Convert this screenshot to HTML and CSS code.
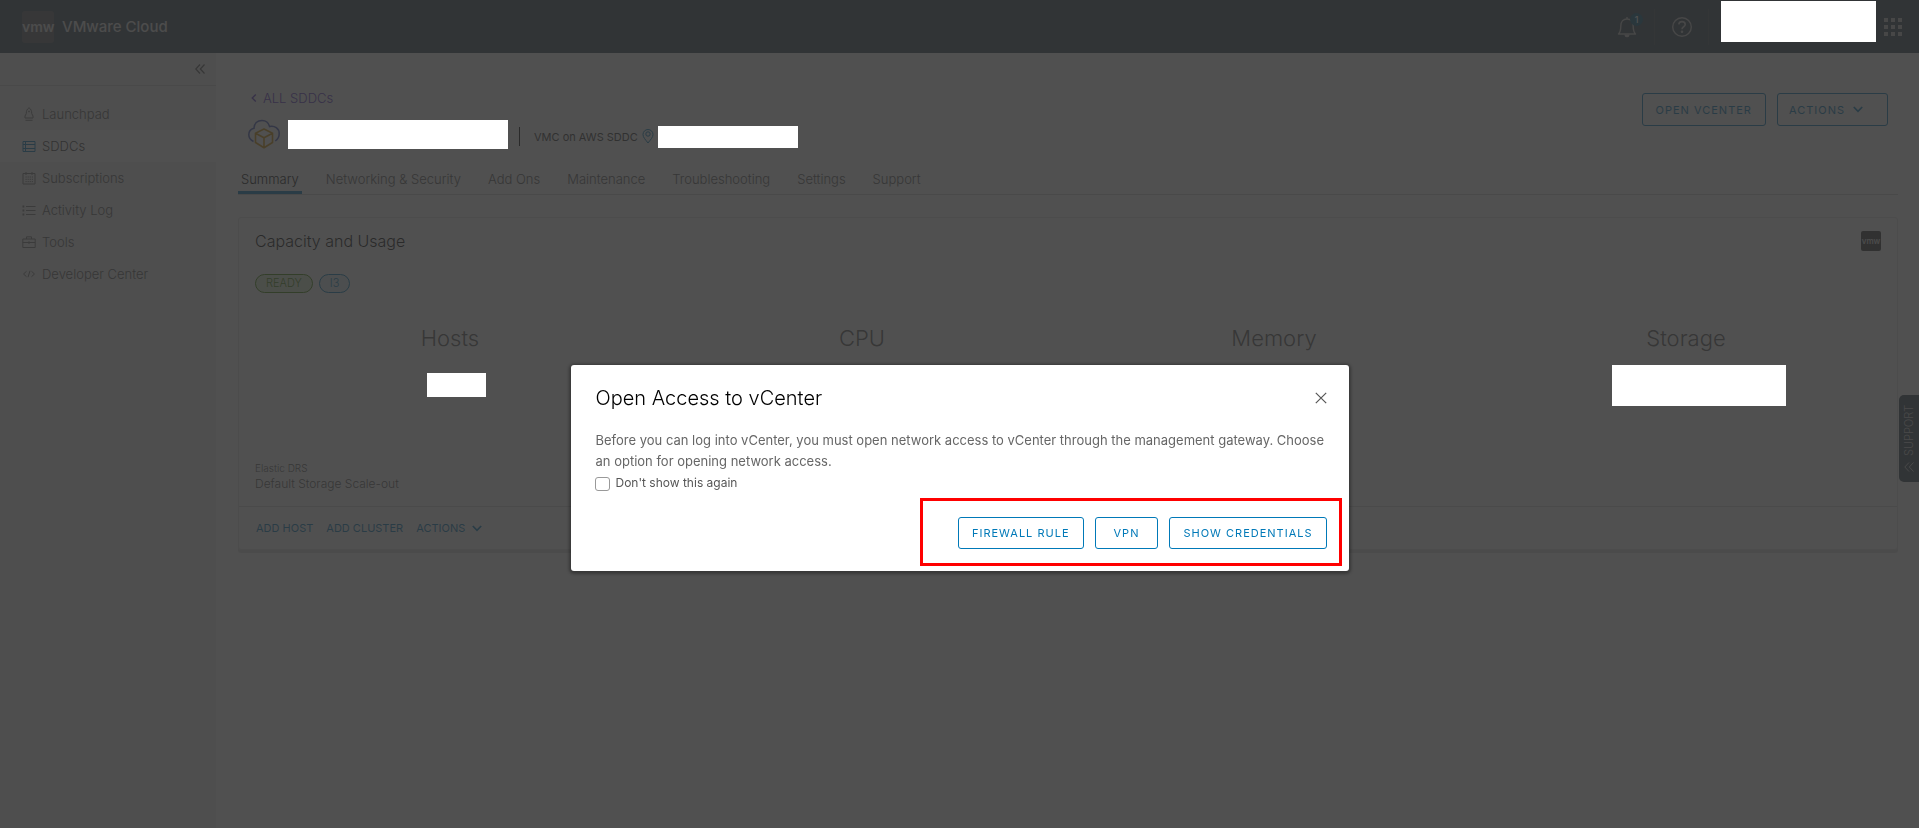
FILE: index.html
```html
<!DOCTYPE html>
<html lang="en">
<head>
<meta charset="utf-8">
<meta name="viewport" content="width=device-width, initial-scale=1">
<title>VMware Cloud</title>
<link rel="stylesheet" href="styles.css">
</head>
<body>
<div class="app">
  <header class="header">
    <span class="logo">vmw</span>
    <span class="brand">VMware Cloud</span>
    <div class="header-tools">
      <button class="tool bell" aria-label="Notifications">
        <svg width="20" height="22" viewBox="0 0 20 22" fill="none" stroke="currentColor" stroke-width="1.4"><path d="M1.5 18 C3.5 16 3.800 14 3.800 10 C3.800 5.500 6.500 3 10 3 C13.500 3 16.200 5.500 16.200 10 C16.200 14 16.500 16 18.500 18 Z" stroke-linejoin="round"/><path d="M10 1v2M8.300 19.300 C8.600 21 11.400 21 11.700 19.300Z" fill="currentColor"/></svg>
        <span class="count">1</span>
      </button>
      <button class="tool help" aria-label="Help">
        <svg width="22" height="22" viewBox="0 0 22 22" fill="none" stroke="currentColor" stroke-width="1.4"><circle cx="11" cy="11" r="9.300"/><path d="M7.800 8.300 C8 6.500 9.300 5.600 11 5.600 C12.900 5.600 14.200 6.700 14.200 8.400 C14.200 10.800 11 10.700 11 13.200" stroke-width="1.600"/><circle cx="11" cy="15.800" r=".6" fill="currentColor"/></svg>
      </button>
      <span class="redacted redacted-account"></span>
      <button class="tool apps" aria-label="Applications">
        <svg width="18" height="18" viewBox="0 0 18 18" fill="currentColor"><path d="M0 0h4v4H0zM7 0h4v4H7zM14 0h4v4h-4zM0 7h4v4H0zM7 7h4v4H7zM14 7h4v4h-4zM0 14h4v4H0zM7 14h4v4H7zM14 14h4v4h-4z"/></svg>
      </button>
    </div>
  </header>

  <div class="body">
    <nav class="sidebar">
      <div class="collapse-row">
        <button class="collapse" aria-label="Collapse navigation">
          <svg width="10" height="10" viewBox="0 0 10 10" fill="none" stroke="currentColor" stroke-width="1.2"><path d="M5 .5 .8 5 5 9.500M9.500 .5 5.300 5l4.200 4.500"/></svg>
        </button>
      </div>
      <div class="nav-list">
        <a class="nav-item" href="#"><svg class="nav-icon" viewBox="0 0 14 14"><path d="M7 .7C4.800 2.300 4.300 4 4.300 6.500L3 9v2h8V9L9.700 6.500C9.700 4 9.200 2.300 7 .7zM3.500 13.300h7"/><circle cx="7" cy="4.500" r=".5"/></svg>Launchpad</a>
        <a class="nav-item active" href="#"><svg class="nav-icon blue" viewBox="0 0 14 14"><path d="M1 2.500h12v10H1zM1 5.500h12M1 9.500h12M3.500 2.500v10"/></svg>SDDCs</a>
        <a class="nav-item" href="#"><svg class="nav-icon" viewBox="0 0 14 14"><path d="M1 2.500h12v10.500H1zM4 1v3M10 1v3"/><path d="M3.500 6h7.500M3.500 8.300h7.500M3.500 10.600h7.500" stroke-dasharray="1.200 .9"/></svg>Subscriptions</a>
        <a class="nav-item" href="#"><svg class="nav-icon" viewBox="0 0 14 14"><path d="M4 3.500h9.500M4 7.500h9.500M4 11.500h9.500"/><path d="M.5 3.500h1.800M.5 7.500h1.800M.5 11.500h1.800" stroke-width="2"/></svg>Activity Log</a>
        <a class="nav-item" href="#"><svg class="nav-icon" viewBox="0 0 14 14"><path d="M.8 4h12.400v8.500H.8zM4.500 4V1.800h5V4M.8 7.500h12.400M7 6.300v2.700"/></svg>Tools</a>
        <a class="nav-item" href="#"><svg class="nav-icon" viewBox="0 0 14 14"><path d="M4.500 4.300 1.500 7l3 2.700M9.500 4.300l3 2.700-3 2.700M8 3.800 6 10.200"/></svg>Developer Center</a>
      </div>
    </nav>

    <main class="main">
      <div class="page-head">
        <div class="page-title">
          <a class="back" href="#"><svg width="6" height="8" viewBox="0 0 6 8" fill="none" stroke="currentColor" stroke-width="1.3"><path d="M4.800 .5 1.200 4l3.600 3.500"/></svg>ALL SDDCs</a>
          <div class="sddc">
            <svg width="32" height="30" viewBox="0 0 32 30" fill="none"><path d="M5.500 22.500C2.500 21 .8 18.500 .8 15.800.8 12.500 3 10 6 9.300 6.200 4.500 9.300 1.500 14 1.500c3.700 0 6.500 2 7.600 6C26.500 6.200 31.200 9.500 31.200 14.500c0 3.300-1.500 5.800-3.900 7.500" stroke="#4357b8" stroke-width="1.500"/><path d="M16 10l8.500 4.200V23.500L16 28.700 7.500 23.500V14.200zM7.500 14.200 16 18.800l8.500-4.600M16 18.800v9.900" stroke="#d19000" stroke-width="1.600" stroke-linejoin="round"/></svg>
            <span class="redacted redacted-name"></span>
            <div class="sddc-info">
              <span class="rule"></span>
              <span class="kind">VMC on AWS SDDC</span>
              <svg class="pin" width="12" height="15" viewBox="0 0 12 15" fill="none" stroke="currentColor"><path d="M6 14C3.500 10.500 1 8.500 1 5.500a5 5 0 0 1 10 0C11 8.500 8.500 10.500 6 14z"/><circle cx="6" cy="5" r="2.200"/></svg>
              <span class="redacted redacted-region"></span>
            </div>
          </div>
        </div>
        <div class="page-actions">
          <button class="btn">OPEN VCENTER</button>
          <button class="btn btn-menu">ACTIONS <svg width="10" height="7" viewBox="0 0 10 7" fill="none" stroke="currentColor" stroke-width="1.700"><path d="M.8 1 5 5.300 9.200 1"/></svg></button>
        </div>
      </div>

      <div class="tabs" role="tablist">
        <button class="tab selected" role="tab" aria-selected="true">Summary</button>
        <button class="tab" role="tab">Networking &amp; Security</button>
        <button class="tab" role="tab">Add Ons</button>
        <button class="tab" role="tab">Maintenance</button>
        <button class="tab" role="tab">Troubleshooting</button>
        <button class="tab" role="tab">Settings</button>
        <button class="tab" role="tab">Support</button>
      </div>

      <section class="card">
        <div class="card-head">
          <h2 class="card-title">Capacity and Usage</h2>
          <span class="logo-small">vmw</span>
        </div>
        <div class="badges"><span class="badge green">READY</span><span class="badge cyan">I3</span></div>
        <div class="metrics">
          <div class="metric"><h3 class="metric-name">Hosts</h3><span class="redacted redacted-hosts"></span></div>
          <div class="metric"><h3 class="metric-name">CPU</h3></div>
          <div class="metric"><h3 class="metric-name">Memory</h3></div>
          <div class="metric"><h3 class="metric-name">Storage</h3><span class="redacted redacted-storage"></span></div>
        </div>
        <div class="drs"><div class="drs-label">Elastic DRS</div><div class="drs-value">Default Storage Scale-out</div></div>
        <div class="card-foot">
          <button class="link-btn">ADD HOST</button>
          <button class="link-btn">ADD CLUSTER</button>
          <button class="link-btn">ACTIONS <svg width="10" height="7" viewBox="0 0 10 7" fill="none" stroke="currentColor" stroke-width="1.700"><path d="M.8 1 5 5.300 9.200 1"/></svg></button>
        </div>
      </section>
    </main>
  </div>
  <button class="support"><svg width="10" height="10" viewBox="0 0 10 10" fill="none" stroke="currentColor"><path d="M5 .5 .8 5 5 9.500M9.500 .5 5.300 5l4.200 4.500"/></svg>SUPPORT</button>
</div>

<div class="backdrop"></div>
<div class="modal-layer">
  <div class="modal" role="dialog" aria-modal="true" aria-labelledby="modal-title">
    <div class="modal-head">
      <h1 class="modal-title" id="modal-title">Open Access to vCenter</h1>
      <button class="close" aria-label="Close"><svg width="12" height="12" viewBox="0 0 12 12" fill="none" stroke="currentColor" stroke-width="1.200"><path d="M.8 .8l10.400 10.400M11.200 .8.8 11.200"/></svg></button>
    </div>
    <p class="modal-text">Before you can log into vCenter, you must open network access to vCenter through the management gateway. Choose an option for opening network access.</p>
    <label class="check" for="hide"><input class="check-box" type="checkbox" id="hide">Don't show this again</label>
    <div class="modal-foot">
      <button class="btn">FIREWALL RULE</button>
      <button class="btn btn-vpn">VPN</button>
      <button class="btn">SHOW CREDENTIALS</button>
    </div>
  </div>
</div>
</body>
</html>
```
FILE: styles.css
```css
* { box-sizing: border-box; }
body { margin: 0; background: #fafafa; color: #565656; font: 300 13px/20px Inter, "Liberation Sans", sans-serif; }
button { margin: 0; padding: 0; border: 0; background: none; color: inherit; font: inherit; }
a { color: inherit; text-decoration: none; }
h1, h2, h3, p { margin: 0; font-weight: 300; }
svg { flex: none; display: block; }

.app { display: flex; flex-direction: column; min-height: 100vh; }
.redacted { position: relative; z-index: 20; flex: none; background: #fff; }

.header { display: flex; align-items: center; height: 53px; padding-left: 22px; background: #314351; color: #e0e0e0; }
.logo { display: grid; place-items: center; width: 32px; height: 32px; border-radius: 3px; background: #5a5a5f; font-size: 14px; font-weight: 600; }
.brand { margin-left: 8px; font-size: 15px; font-weight: 500; }
.header-tools { display: flex; align-items: center; height: 100%; margin-left: auto; padding-right: 17px; }
.tool { display: flex; align-items: center; justify-content: center; height: 36px; color: #c0c0c0; }
.bell { position: relative; width: 54px; border-right: 1px solid #45505a; }
.bell svg { margin-right: 2px; }
.count { position: absolute; top: 4px; right: 11px; width: 13px; height: 13px; border-radius: 50%; background: #00567a; color: #fff; font-size: 9px; font-weight: 500; line-height: 13px; }
.help { width: 54px; border-right: 1px solid #45505a; }
.redacted-account { width: 155px; height: 41px; margin: 0 8px 10px 12px; }

.body { display: flex; flex: 1; }
.sidebar { flex: none; width: 216px; background: #eee; }
.collapse-row { display: flex; justify-content: flex-end; align-items: center; height: 33px; padding-right: 11px; border-bottom: 1px solid #ccc; }
.nav-list { padding-top: 12px; }
.nav-item { display: flex; align-items: center; gap: 6px; height: 32px; padding-left: 22px; }
.nav-item.active { background: #fff; color: #313131; }
.nav-icon { width: 14px; height: 14px; fill: none; stroke: currentColor; stroke-width: 1; color: #737373; }
.nav-icon.blue { color: #0079b8; }

.main { flex: 1; min-width: 0; padding: 35px 21px 40px 22px; }
.page-head { display: flex; justify-content: space-between; align-items: flex-start; }
.page-title { padding-left: 10px; }
.back { display: flex; align-items: center; gap: 6px; padding-left: 3px; color: #5a30c8; }
.sddc { display: flex; align-items: center; height: 30px; margin-top: 11px; }
.redacted-name { width: 220px; height: 29px; margin-left: 8px; }
.sddc-info { display: flex; align-items: center; padding-top: 5px; }
.rule { width: 1px; height: 19px; margin: 0 14px 0 11px; background: #000; }
.kind { color: #313131; font-size: 11px; font-weight: 400; }
.pin { margin: 0 4px; color: #0079b8; }
.redacted-region { width: 140px; height: 22px; }
.page-actions { display: flex; gap: 11px; padding: 5px 10px 0 0; }
.btn { display: flex; align-items: center; justify-content: center; gap: 8px; height: 33px; padding: 0 13px; border: 1px solid #0079b8; border-radius: 3px; color: #0079b8; font-size: 11px; font-weight: 400; letter-spacing: 1px; white-space: nowrap; }
.btn-menu { padding: 0 24px 0 11px; }

.tabs { display: flex; gap: 21px; height: 46px; border-bottom: 1px solid #ccc; }
.tab { padding: 14px 3px 0; color: #565656; }
.tab.selected { padding-top: 17px; border-bottom: 3px solid #0079b8; color: #000; }

.card { margin-top: 22px; border: 1px solid #e0e0e0; border-radius: 3px; background: #fff; box-shadow: 0 3px 0 #dedede; }
.card-head { display: flex; justify-content: space-between; align-items: center; padding: 12px 16px 0; }
.card-title { color: #000; font-size: 16px; line-height: 22px; }
.logo-small { display: grid; place-items: center; width: 20px; height: 20px; border-radius: 2px; background: #333; color: #ddd; font-size: 8px; font-weight: 600; }
.badges { display: flex; gap: 6px; padding: 22px 16px 0; }
.badge { height: 19px; padding: 0 10px; border: 1px solid; border-radius: 10px; font-size: 11px; line-height: 16px; }
.green { border-color: #3c8500; background: #dff0d0; color: #3c8500; }
.cyan { border-color: #0079b8; background: #e1f1f6; color: #0079b8; }
.metrics { display: grid; grid-template-columns: repeat(4, 1fr); min-height: 168px; padding: 29px 5px 0; }
.metric { display: flex; flex-direction: column; align-items: center; }
.metric-name { font-size: 22px; line-height: 32px; }
.redacted-hosts { width: 59px; height: 24px; margin: 19px 0 0 12px; }
.redacted-storage { width: 174px; height: 41px; margin: 11px 0 0 26px; }
.drs { padding: 0 16px 13px; }
.drs-label { font-size: 10px; line-height: 14px; }
.drs-value { font-size: 12px; line-height: 18px; }
.card-foot { display: flex; align-items: center; gap: 13px; height: 43px; padding: 0 17px; border-top: 1px solid #d7d7d7; }
.link-btn { display: flex; align-items: center; gap: 7px; color: #0079b8; font-size: 11px; font-weight: 400; }

.support { position: fixed; top: 395px; right: 0; display: flex; align-items: center; justify-content: center; gap: 6px; width: 20px; height: 87px; border-radius: 0 5px 5px 0; background: #314351; color: #ccc; font-size: 11px; writing-mode: vertical-rl; transform: rotate(180deg); }
.support svg { transform: rotate(180deg); }

.backdrop { position: fixed; inset: 0; z-index: 10; background: rgba(49, 49, 49, .85); }
.modal-layer { position: fixed; inset: 0; z-index: 30; display: flex; justify-content: center; align-items: flex-start; padding-top: 365px; pointer-events: none; }
.modal { width: 778px; padding: 20px 22px 17px 25px; border-radius: 3px; background: #fff; box-shadow: 0 1px 3px 2px rgba(0, 0, 0, .3); pointer-events: auto; }
.modal-head { display: flex; justify-content: space-between; align-items: center; height: 26px; }
.modal-title { color: #000; font-size: 20px; }
.modal-text { margin-top: 19px; font-weight: 400; line-height: 21px; color: #666; }
.check { display: flex; align-items: center; gap: 6px; font-size: 12px; font-weight: 400; line-height: 22px; }
.check-box { appearance: none; width: 15px; height: 14px; margin: 2px 0 0 -1px; border: 1px solid #999; border-radius: 3px; background: #fff; }
.modal-foot { display: flex; justify-content: flex-end; gap: 11px; width: 422px; margin: 4px -15px -12px auto; padding: 16px 12px 14px; border: 3px solid #f00; }
.modal-foot .btn { height: 32px; }
.modal-foot .btn-vpn { padding: 0 18px; }
```
